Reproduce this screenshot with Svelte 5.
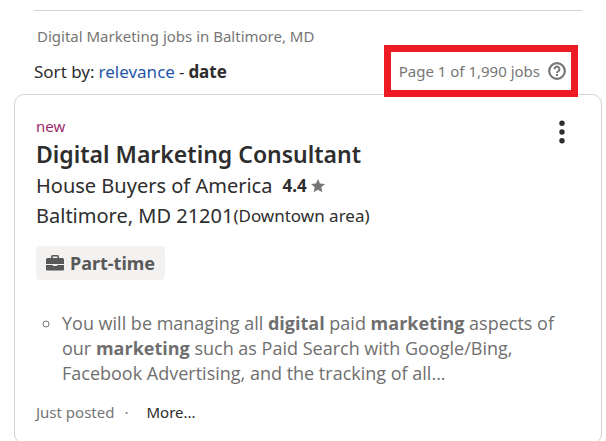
<script>
  let sort = $state('date');
  const job = {
    title: 'Digital Marketing Consultant',
    company: 'House Buyers of America',
    rating: '4.4',
    location: 'Baltimore, MD 21201',
    area: '(Downtown area)',
    type: 'Part-time'
  };
</script>

<main>
  <header>
    <h1>Digital Marketing jobs in Baltimore, MD</h1>
    <div class="toolbar">
      <div class="sort">
        <span>Sort by:</span>
        {#each ['relevance', 'date'] as option, i}
          {#if i > 0}<span>-</span>{/if}
          {#if sort === option}
            <b>{option}</b>
          {:else}
            <a href="#{option}" onclick={() => (sort = option)}>{option}</a>
          {/if}
        {/each}
      </div>
      <div class="count">
        <span>Page 1 of 1,990 jobs</span>
        <button class="icon-button" aria-label="Help">
          <svg width="18" height="18" viewBox="0 0 18 18" fill="none" stroke="#767676">
            <circle cx="9" cy="9" r="7.8" stroke-width="2.2" />
            <path d="M6.500 7.300a2.500 2.500 0 1 1 3.900 1.900c-.9.6-1.400.9-1.400 1.900" stroke-width="2" />
            <path d="M9 12v2" stroke-width="2" />
          </svg>
        </button>
      </div>
    </div>
  </header>

  <article class="card">
    <div class="card-top">
      <div>
        <div class="new">new</div>
        <h2>{job.title}</h2>
      </div>
      <button class="icon-button menu" aria-label="Job options">
        <svg width="6" height="24" viewBox="0 0 6 24" fill="#2d2d2d">
          <circle cx="3" cy="3.3" r="2.7" />
          <circle cx="3" cy="12" r="2.7" />
          <circle cx="3" cy="20.7" r="2.7" />
        </svg>
      </button>
    </div>
    <div class="line">
      <span>{job.company}</span>
      <b class="rating">{job.rating}</b>
      <svg width="14" height="14" viewBox="0 0 14 14" fill="#767676" aria-hidden="true">
        <path d="M7 0l2 4.600 5 .4-3.800 3.300 1.200 5L7 10.700l-4.400 2.600 1.200-5L0 5l5-.4z" />
      </svg>
    </div>
    <div class="line">
      <span>{job.location}</span><span class="area">{job.area}</span>
    </div>

    <div class="tag">
      <svg width="18" height="16" viewBox="0 0 18 16" fill="#595959" aria-hidden="true">
        <path fill-rule="evenodd" d="M5 3V1.500Q5 0 6.500 0h5Q13 0 13 1.500V3h3.500Q18 3 18 4.500V9H0V4.500Q0 3 1.500 3zM6.600 3h4.800V1.600H6.600z" />
        <path d="M0 10h7v1h4v-1h7v4.500q0 1-1 1H1q-1 0-1-1z" />
      </svg>
      {job.type}
    </div>

    <ul>
      <li>
        You will be managing all <b>digital</b> paid <b>marketing</b> aspects of our
        <b>marketing</b> such as Paid Search with Google/Bing, Facebook Advertising, and the
        tracking of all...
      </li>
    </ul>

    <footer>
      <span>Just posted</span>
      <span>·</span>
      <button class="more">More...</button>
    </footer>
  </article>
</main>

<style>
  :global(body) {
    margin: 0;
    background: #fff;
  }

  main {
    padding: 10px 4px 0 14px;
    font-family: "Noto Sans", "Open Sans", sans-serif;
    font-size: 15px;
    color: #2d2d2d;
  }

  header {
    margin: 0 20px;
    border-top: 1px solid #d4d2d0;
  }

  h1 {
    margin: 15px 3px 0;
    font-size: 15px;
    line-height: 20px;
    font-weight: 400;
    color: #767676;
  }

  .toolbar {
    display: flex;
    justify-content: space-between;
    align-items: center;
    margin-top: -1px;
  }

  .sort {
    display: flex;
    gap: 4px;
    font-size: 17px;
  }

  a {
    color: #2557a7;
    text-decoration: none;
  }

  .count {
    position: relative;
    z-index: 1;
    display: flex;
    align-items: center;
    gap: 8px;
    box-sizing: border-box;
    height: 52px;
    margin-right: 4px;
    padding: 0 5px 0 8px;
    border: 7px solid #ed1c24;
    background: #fff;
    color: #767676;
  }

  .icon-button {
    display: flex;
    padding: 0;
    border: none;
    background: none;
    cursor: pointer;
  }

  .card {
    margin-top: -3px;
    padding: 21px 21px;
    border: 1px solid #d4d2d0;
    border-radius: 10px;
  }

  .card-top {
    display: flex;
    justify-content: space-between;
    align-items: flex-start;
  }

  .new {
    line-height: 20px;
    color: #9d2b6b;
  }

  h2 {
    margin: 3px 0 2px;
    font-size: 23px;
    line-height: 30px;
    font-weight: 600;
  }

  .menu {
    padding: 4px 15px 0;
  }

  .line {
    display: flex;
    align-items: center;
    font-size: 20px;
    line-height: 30px;
  }

  .rating {
    margin: 0 4px 0 10px;
    font-size: 17px;
  }

  .area {
    font-size: 17px;
  }

  .tag {
    display: flex;
    align-items: center;
    gap: 6px;
    width: fit-content;
    margin-top: 15px;
    padding: 0 10px;
    border-radius: 4px;
    background: #f3f2f1;
    font-size: 18px;
    line-height: 34px;
    font-weight: 700;
    color: #595959;
  }

  ul {
    margin: 31px 20px 0 0;
    padding-left: 26px;
    list-style: circle;
    font-family: "Open Sans", "Noto Sans", sans-serif;
    font-size: 18px;
    line-height: 25px;
    color: #6f6f6f;
  }

  footer {
    display: flex;
    gap: 10px;
    margin-top: 16px;
    line-height: 20px;
    color: #767676;
  }

  .more {
    margin-left: 8px;
    padding: 0;
    border: none;
    background: none;
    font: inherit;
    color: #2d2d2d;
    cursor: pointer;
  }
</style>
